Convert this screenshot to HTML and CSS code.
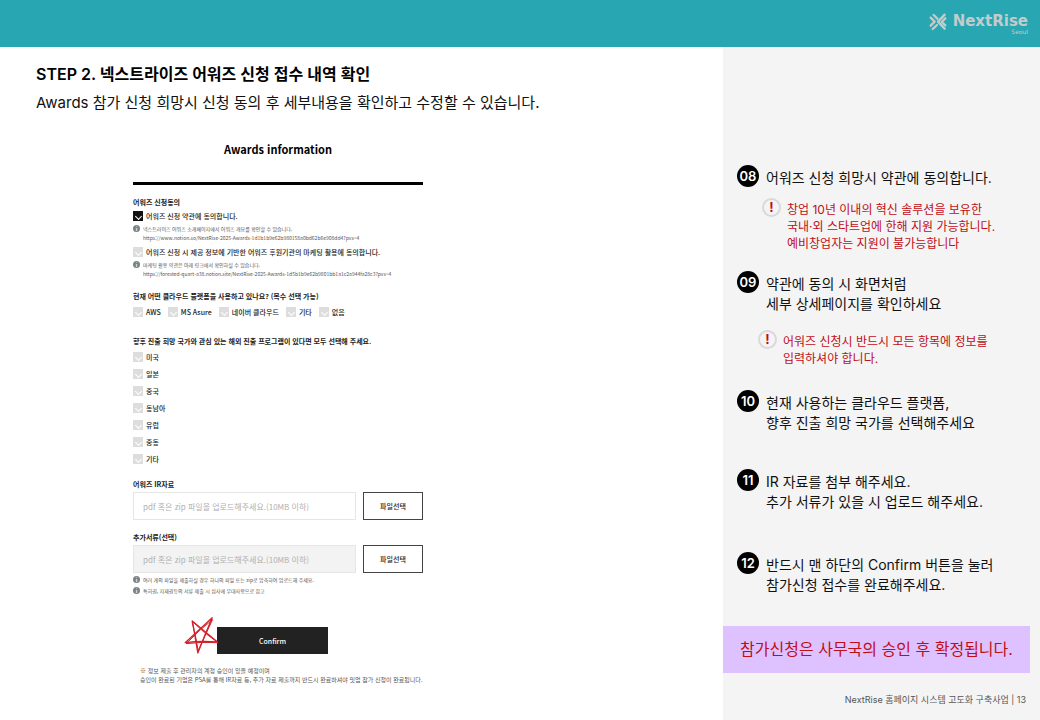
FILE: index.html
```html
<!DOCTYPE html>
<html lang="ko">
<head>
  <meta charset="UTF-8">
  <meta name="viewport" content="width=device-width, initial-scale=1.0">
  <title>NextRise 어워즈 신청 안내</title>
  <link rel="stylesheet" href="styles.css">
</head>
<body>
  <header class="topbar">
    <a class="logo" href="#">
      <svg class="logo-mark" viewBox="0 0 54 54" fill="none" stroke="currentColor" stroke-width="7" stroke-linecap="round" stroke-linejoin="round">
        <path d="M5 14 L17 26 L5 38"/>
        <path d="M14 6 L25 17"/>
        <path d="M47 5 L27 26 L47 47"/>
        <path d="M38 27 L49 16"/>
        <path d="M39 28 L49 37"/>
        <path d="M11 48 L24 36"/>
      </svg>
      <span class="logo-text">
        <span class="logo-name">NextRise</span>
        <span class="logo-city">Seoul</span>
      </span>
    </a>
  </header>

  <div class="page">
    <main class="content">
      <h1 class="step-title">STEP 2. 넥스트라이즈 어워즈 신청 접수 내역 확인</h1>
      <p class="step-desc">Awards 참가 신청 희망시 신청 동의 후 세부내용을 확인하고 수정할 수 있습니다.</p>

      <form class="awards-form">
        <h2 class="form-title">Awards information</h2>

        <fieldset class="group agree">
          <legend>어워즈 신청동의</legend>
          <label class="check"><input type="checkbox" checked>어워즈 신청 약관에 동의합니다.</label>
          <div class="info">
            <span class="info-icon">i</span>
            <p>넥스트라이즈 어워즈 소개페이지에서 어워즈 개요를 확인할 수 있습니다.<br><a href="#">https://www.notion.so/NextRise-2025-Awards-1d1b1b9e62b980158a0bd62b6e908dd4?pvs=4</a></p>
          </div>
          <label class="check"><input type="checkbox">어워즈 신청 시 제공 정보에 기반한 어워즈 후원기관의 마케팅 활용에 동의합니다.</label>
          <div class="info">
            <span class="info-icon">i</span>
            <p>마케팅 활용 약관은 아래 링크에서 확인하실 수 있습니다.<br><a href="#">https://forested-quart-a38.notion.site/NextRise-2025-Awards-1d5b1b9e62b9801bb1a1c2a944fa28c3?pvs=4</a></p>
          </div>
        </fieldset>

        <fieldset class="group cloud">
          <legend>현재 어떤 클라우드 플랫폼을 사용하고 있나요? (복수 선택 가능)</legend>
          <div class="check-row">
            <label class="check"><input type="checkbox">AWS</label>
            <label class="check"><input type="checkbox">MS Asure</label>
            <label class="check"><input type="checkbox">네이버 클라우드</label>
            <label class="check"><input type="checkbox">기타</label>
            <label class="check"><input type="checkbox">없음</label>
          </div>
        </fieldset>

        <fieldset class="group country">
          <legend>향후 진출 희망 국가와 관심 있는 해외 진출 프로그램이 있다면 모두 선택해 주세요.</legend>
          <div class="check-list">
            <label class="check"><input type="checkbox">미국</label>
            <label class="check"><input type="checkbox">일본</label>
            <label class="check"><input type="checkbox">중국</label>
            <label class="check"><input type="checkbox">동남아</label>
            <label class="check"><input type="checkbox">유럽</label>
            <label class="check"><input type="checkbox">중동</label>
            <label class="check"><input type="checkbox">기타</label>
          </div>
        </fieldset>

        <div class="file-fields">
          <div class="file-field">
            <label for="ir-file">어워즈 IR자료</label>
            <div class="file-row">
              <input type="text" id="ir-file" placeholder="pdf 혹은 zip 파일을 업로드해주세요.(10MB 이하)">
              <button type="button">파일선택</button>
            </div>
          </div>

          <div class="file-field">
            <label for="extra-file">추가서류(선택)</label>
            <div class="file-row">
              <input type="text" id="extra-file" placeholder="pdf 혹은 zip 파일을 업로드해주세요.(10MB 이하)" disabled>
              <button type="button">파일선택</button>
            </div>
          </div>
        </div>

        <div class="file-notes">
          <div class="info">
            <span class="info-icon">i</span>
            <p>여러 개의 파일을 제출하실 경우 하나의 파일 또는 zip로 압축하여 업로드해 주세요.</p>
          </div>
          <div class="info">
            <span class="info-icon">i</span>
            <p>특허권, 지재권등의 서류 제출 시 심사에 우대사항으로 참고</p>
          </div>
        </div>

        <div class="submit">
          <button type="submit">Confirm</button>
          <svg class="star" viewBox="188 48 110 120" fill="none" stroke="#d3202a" stroke-width="4" stroke-linecap="round" stroke-linejoin="round">
            <path d="M215 66 L291 129 Q240 125 194 131 L275 56 Q254 105 232 162 L216 67"/>
            <path d="M217 68 L252 101 L293 131 Q240 128 197 134 L240 92 L276 62 L233 155 Q226 110 215 70" stroke-width="3"/>
          </svg>
        </div>

        <p class="form-note">※ 정보 제출 후 관리자의 계정 승인이 있을 예정이며<br>승인이 완료된 기업은 PSA를 통해 IR자료 등, 추가 자료 제출까지 반드시 완료하셔야 밋업 참가 신청이 완료됩니다.</p>
      </form>
    </main>

    <aside class="guide">
      <section class="guide-step">
        <span class="badge">08</span>
        <p>어워즈 신청 희망시 약관에 동의합니다.</p>
      </section>
      <div class="alert">
        <span class="alert-icon">!</span>
        <p>창업 10년 이내의 혁신 솔루션을 보유한<br>국내·외 스타트업에 한해 지원 가능합니다.<br>예비창업자는 지원이 불가능합니다</p>
      </div>

      <section class="guide-step step-09">
        <span class="badge">09</span>
        <p>약관에 동의 시 화면처럼<br>세부 상세페이지를 확인하세요</p>
      </section>
      <div class="alert alert-input">
        <span class="alert-icon">!</span>
        <p>어워즈 신청시 반드시 모든 항목에 정보를<br>입력하셔야 합니다.</p>
      </div>

      <section class="guide-step step-10">
        <span class="badge">10</span>
        <p>현재 사용하는 클라우드 플랫폼,<br>향후 진출 희망 국가를 선택해주세요</p>
      </section>

      <section class="guide-step step-11">
        <span class="badge">11</span>
        <p>IR 자료를 첨부 해주세요.<br>추가 서류가 있을 시 업로드 해주세요.</p>
      </section>

      <section class="guide-step step-12">
        <span class="badge">12</span>
        <p>반드시 맨 하단의 Confirm 버튼을 눌러<br>참가신청 접수를 완료해주세요.</p>
      </section>

      <p class="banner">참가신청은 사무국의 승인 후 확정됩니다.</p>
      <footer class="page-footer">NextRise 홈페이지 시스템 고도화 구축사업 | 13</footer>
    </aside>
  </div>
</body>
</html>
```

FILE: styles.css
```css
* {
  margin: 0;
  padding: 0;
  box-sizing: border-box;
}

body {
  font-family: Inter, 'Noto Sans CJK KR', sans-serif;
  background: #ffffff;
  color: #111111;
  min-height: 100vh;
  display: flex;
  flex-direction: column;
}

/* header */
.topbar {
  height: 47px;
  background: #28a7b2;
  display: flex;
  justify-content: flex-end;
  padding: 13px 12px 0;
}

.logo {
  display: flex;
  gap: 6px;
  color: #c3cccc;
  text-decoration: none;
}

.logo-mark {
  width: 18px;
  height: 18px;
}

.logo-text {
  display: flex;
  flex-direction: column;
  align-items: flex-end;
  font-family: 'DejaVu Sans', sans-serif;
}

.logo-name {
  font-size: 15px;
  line-height: 17px;
  font-weight: 700;
}

.logo-city {
  font-size: 6px;
  line-height: 4px;
}

.page {
  flex: 1;
  display: flex;
}

/* main column */
.content {
  flex: 1;
  padding: 15px 36px 32px;
}

.step-title {
  font-size: 16px;
  line-height: 25px;
  font-weight: 600;
  color: #000000;
}

.step-desc {
  margin-top: 4px;
  font-size: 15px;
  line-height: 24px;
}

.awards-form {
  width: 290px;
  margin: 24px 0 0 97px;
  font-family: 'Noto Sans CJK KR', sans-serif;
  color: #222222;
}

.form-title {
  padding-bottom: 23px;
  border-bottom: 3px solid #000000;
  font-size: 11px;
  line-height: 20px;
  font-weight: 700;
  text-align: center;
  color: #000000;
}

.group {
  border: 0;
}

.group legend,
.file-field label {
  display: block;
  font-size: 7px;
  line-height: 10px;
  font-weight: 700;
  white-space: nowrap;
}

.agree {
  margin-top: 12px;
}

.check {
  display: flex;
  align-items: center;
  gap: 3px;
  font-size: 7px;
  line-height: 10px;
  font-weight: 500;
  white-space: nowrap;
}

.check input {
  appearance: none;
  position: relative;
  width: 10px;
  height: 10px;
  background: #dddddd;
}

.check input::before {
  content: '';
  position: absolute;
  left: 3px;
  top: 3px;
  width: 4px;
  height: 4px;
  border-left: 1px solid #ffffff;
  border-bottom: 1px solid #ffffff;
  transform: rotate(-45deg);
}

.check input:checked {
  background: #111111;
}

.agree .check {
  margin-top: 4px;
}

.info {
  display: flex;
  gap: 3px;
  font-size: 5px;
  line-height: 9px;
  color: #555555;
  white-space: nowrap;
}

.info a {
  color: inherit;
  text-decoration: none;
}

.info-icon {
  width: 7px;
  height: 7px;
  margin-top: 1px;
  border-radius: 50%;
  background: #7b8287;
  color: #ffffff;
  font-weight: 700;
  line-height: 7px;
  text-align: center;
}

.agree .info {
  margin-top: 3px;
  margin-bottom: 5px;
}

.cloud {
  margin-top: 8px;
}

.check-row {
  display: flex;
  gap: 7px;
  margin-top: 6px;
}

.country {
  margin-top: 19px;
}

.check-list {
  display: flex;
  flex-direction: column;
  gap: 7px;
  margin-top: 6px;
}

.file-fields {
  display: flex;
  flex-direction: column;
  gap: 12px;
  margin-top: 15px;
}

.file-row {
  display: flex;
  gap: 7px;
  margin-top: 3px;
}

.file-row input {
  flex: 1;
  min-width: 0;
  height: 28px;
  padding: 0 9px;
  border: 1px solid #e6e6e6;
  background: #ffffff;
  font-family: inherit;
  font-size: 8px;
}

.file-row input:disabled {
  background: #f3f3f3;
}

.file-row input::placeholder {
  color: #b0b0b0;
}

.file-row button {
  width: 60px;
  border: 1px solid #444444;
  background: #ffffff;
  color: #222222;
  font-family: inherit;
  font-size: 7px;
  font-weight: 500;
}

.file-notes {
  display: flex;
  flex-direction: column;
  gap: 2px;
  margin-top: 2px;
}

.submit {
  position: relative;
  width: 111px;
  margin: 32px 0 0 84px;
}

.submit button {
  display: block;
  width: 100%;
  height: 27px;
  border: 0;
  background: #222222;
  color: #ffffff;
  font-family: inherit;
  font-size: 7px;
  font-weight: 500;
}

/* hand-drawn mark over the button corner */
.star {
  position: absolute;
  left: -34px;
  top: -12px;
  width: 37px;
  height: 40px;
}

.form-note {
  margin: 12px 0 0 7px;
  font-size: 6px;
  line-height: 9px;
  color: #555555;
  white-space: nowrap;
}

/* guide column */
.guide {
  width: 317px;
  padding-top: 118px;
  background: #f4f4f4;
}

.guide-step {
  display: flex;
  gap: 7px;
  padding-left: 14px;
}

.guide-step p {
  padding-top: 3px;
  font-size: 14px;
  line-height: 20px;
}

.badge {
  width: 22px;
  height: 22px;
  border-radius: 50%;
  background: #000000;
  color: #ffffff;
  font-size: 13px;
  line-height: 22px;
  font-weight: 600;
  text-align: center;
}

.alert {
  display: flex;
  gap: 6px;
  margin-top: 10px;
  padding-left: 39px;
  color: #c00d16;
}

.alert-input {
  margin-top: 16px;
  padding-left: 35px;
}

.alert p {
  padding-top: 3px;
  font-size: 12px;
  line-height: 17px;
}

.alert-icon {
  width: 19px;
  height: 19px;
  border: 2px solid #d9d9d9;
  border-radius: 50%;
  font-size: 13px;
  line-height: 15px;
  font-weight: 700;
  text-align: center;
}

.step-09 {
  margin-top: 19px;
}

.step-10 {
  margin-top: 23px;
}

.step-11 {
  margin-top: 36px;
}

.step-12 {
  margin-top: 40px;
}

.banner {
  margin: 31px 10px 0 0;
  background: #dec1ff;
  color: #c00d16;
  font-size: 16px;
  line-height: 47px;
  text-align: center;
}

.page-footer {
  margin-top: 20px;
  padding-right: 14px;
  font-size: 9px;
  line-height: 14px;
  color: #555555;
  text-align: right;
}
```
